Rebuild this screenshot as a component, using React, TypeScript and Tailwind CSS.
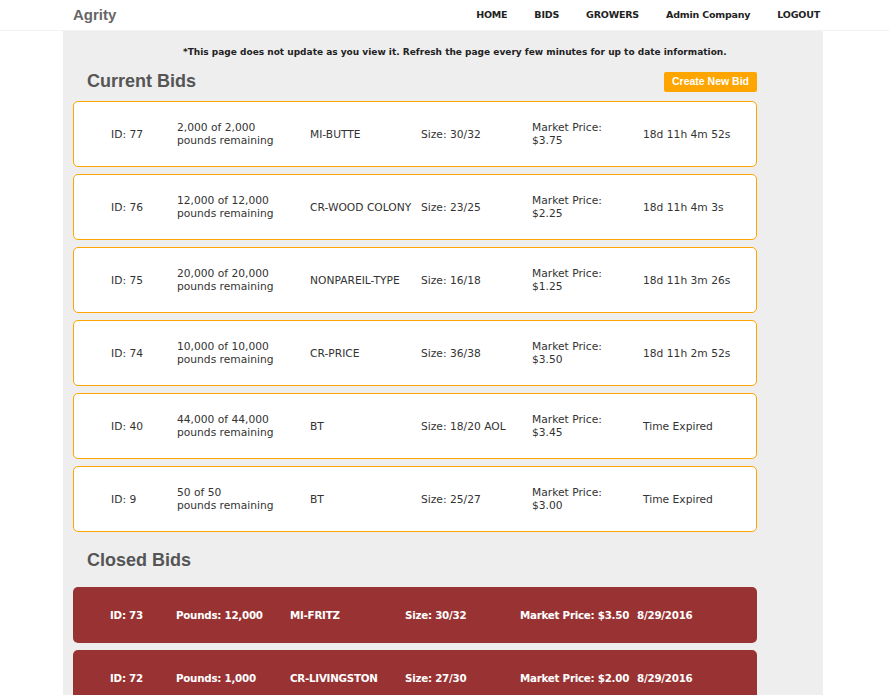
const verdana = { fontFamily: '"DejaVu Sans", Verdana, sans-serif' };
const arial = { fontFamily: '"Liberation Sans", Arial, sans-serif' };

type Bid = { id: number; amount: string; variety: string; size: string; price: string; time: string };

const current: Bid[] = [
  { id: 77, amount: "2,000 of 2,000", variety: "MI-BUTTE", size: "30/32", price: "$3.75", time: "18d 11h 4m 52s" },
  { id: 76, amount: "12,000 of 12,000", variety: "CR-WOOD COLONY", size: "23/25", price: "$2.25", time: "18d 11h 4m 3s" },
  { id: 75, amount: "20,000 of 20,000", variety: "NONPAREIL-TYPE", size: "16/18", price: "$1.25", time: "18d 11h 3m 26s" },
  { id: 74, amount: "10,000 of 10,000", variety: "CR-PRICE", size: "36/38", price: "$3.50", time: "18d 11h 2m 52s" },
  { id: 40, amount: "44,000 of 44,000", variety: "BT", size: "18/20 AOL", price: "$3.45", time: "Time Expired" },
  { id: 9, amount: "50 of 50", variety: "BT", size: "25/27", price: "$3.00", time: "Time Expired" },
];

const closed = [
  { id: 73, pounds: "12,000", variety: "MI-FRITZ", size: "30/32", price: "$3.50", date: "8/29/2016" },
  { id: 72, pounds: "1,000", variety: "CR-LIVINGSTON", size: "27/30", price: "$2.00", date: "8/29/2016" },
];

export default function App() {
  return (
    <div className="min-h-screen bg-white text-[#333]" style={verdana}>
      <header className="h-[31px] border-b border-[#f3f3f3] bg-white">
        <div className="mx-[63px] flex h-[30px] items-center justify-between pl-[10px] pr-[6px]">
          <span className="text-[15px] font-bold text-[#666]" style={arial}>
            Agrity
          </span>
          <nav className="flex items-center gap-[27px] text-[9.5px] font-bold tracking-[-0.2px] text-[#222]">
            <span>HOME</span>
            <span>BIDS</span>
            <span>GROWERS</span>
            <span>Admin Company</span>
            <span>LOGOUT</span>
          </nav>
        </div>
      </header>

      <main className="ml-[63px] w-[760px] bg-[#eeeeee] pb-6">
        <p className="pl-[120px] pt-[15px] text-[9px] font-bold text-[#222]">
          *This page does not update as you view it. Refresh the page every few minutes for up to date information.
        </p>

        <div className="mt-[8px] flex w-[694px] items-center justify-between pl-6">
          <h2 className="text-[18px] font-bold text-[#555]" style={arial}>
            Current Bids
          </h2>
          <button className="mt-[2px] h-[20px] rounded-[2px] bg-[#ffa500] px-2 text-[10.5px] font-bold text-white" style={arial}>
            Create New Bid
          </button>
        </div>

        <div className="mt-[6px] flex flex-col gap-[7px] pl-[10px]">
          {current.map((b) => (
            <div
              key={b.id}
              className="flex h-[66px] w-[684px] items-center rounded-[5px] border border-[#ffa500] bg-white pl-[37px] pt-[1px] text-[10.7px] leading-[13px]"
            >
              <div className="w-[66px]">ID: {b.id}</div>
              <div className="w-[133px]">
                {b.amount}
                <br />
                pounds remaining
              </div>
              <div className="w-[111px] whitespace-nowrap">{b.variety}</div>
              <div className="w-[111px]">Size: {b.size}</div>
              <div className="w-[111px]">
                Market Price:
                <br />
                {b.price}
              </div>
              <div>{b.time}</div>
            </div>
          ))}
        </div>

        <h2 className="mt-[15px] pl-6 text-[18px] font-bold text-[#555]" style={arial}>
          Closed Bids
        </h2>

        <div className="mt-[13px] flex flex-col gap-[7px] pl-[10px]">
          {closed.map((b) => (
            <div
              key={b.id}
              className="flex h-[56px] w-[684px] items-center rounded-[5px] bg-[#993333] pl-[37px] pt-[3px] text-[10.3px] font-bold tracking-[-0.25px] text-white"
            >
              <div className="w-[66px]">ID: {b.id}</div>
              <div className="w-[114px]">Pounds: {b.pounds}</div>
              <div className="w-[115px]">{b.variety}</div>
              <div className="w-[115px]">Size: {b.size}</div>
              <div className="mr-[8px] whitespace-nowrap">Market Price: {b.price}</div>
              <div>{b.date}</div>
            </div>
          ))}
        </div>
      </main>
    </div>
  );
}
